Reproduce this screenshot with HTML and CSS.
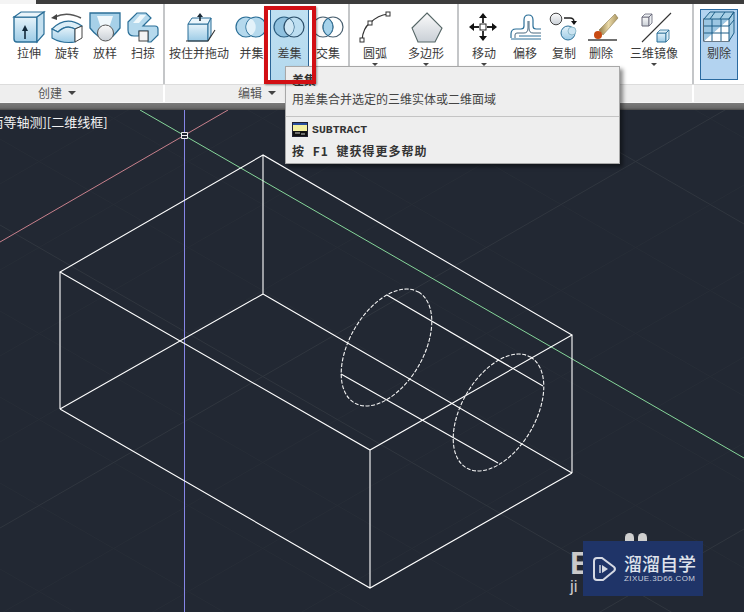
FILE: index.html
```html
<!DOCTYPE html>
<html lang="zh">
<head>
<meta charset="utf-8">
<title>差集</title>
<link rel="stylesheet" href="styles.css">
</head>
<body>
<svg class="defs" width="0" height="0" aria-hidden="true">
  <defs>
    <linearGradient id="blue" x1="0" y1="0" x2="0" y2="1"><stop offset="0" stop-color="#e6f3fa"/><stop offset="1" stop-color="#9ccbe6"/></linearGradient>
    <linearGradient id="gray" x1="0" y1="0" x2="0" y2="1"><stop offset="0" stop-color="#fbfbfb"/><stop offset="1" stop-color="#c9cfd6"/></linearGradient>
    <linearGradient id="stick" x1="0" y1="0" x2="1" y2="0"><stop offset="0" stop-color="#8f7a45"/><stop offset=".5" stop-color="#ead9a8"/><stop offset="1" stop-color="#a99560"/></linearGradient>
  </defs>
</svg>
<div class="app">
  <div class="topbar"><div class="topbar-left"></div></div>
  <div class="ribbon">
    <section class="panel p1">
      <div class="tool w38"><svg width="38" height="38" viewBox="10 8 38 38"><path d="M14 17H37V42H17Q14 42 14 39Z" fill="url(#blue)" stroke="#2b6f98" stroke-width="1.4"/><path d="M14 17L21 12H44L37 17Z" fill="#e9f4fa" stroke="#2b6f98" stroke-width="1.2"/><path d="M37 17L44 12V34L37 42Z" fill="#c4e0f0" stroke="#2b6f98" stroke-width="1.2"/><path d="M25 39V30" stroke="#12293a" stroke-width="1.6"/><path d="M22 31L25 25L28 31Z" fill="#12293a"/></svg><span class="label">拉伸</span></div>
      <div class="tool w38"><svg width="38" height="38" viewBox="48 8 38 38"><path d="M55 17Q67 11 81 18" fill="none" stroke="#555" stroke-width="1.4"/><path d="M51 18L57 14V20Z" fill="#444"/><path d="M52 29Q66 15 82 26L75 29Q66 24 58 32Z" fill="#dceef7" stroke="#2b6f98" stroke-width="1.1"/><path d="M52 29L58 32Q66 24 75 29V42Q62 44 52 38Z" fill="url(#blue)" stroke="#2b6f98" stroke-width="1.1"/><path d="M75 29L82 26V38L75 42Z" fill="#fff" stroke="#444" stroke-width="1"/></svg><span class="label">旋转</span></div>
      <div class="tool w38"><svg width="38" height="38" viewBox="86 8 38 38"><path d="M90 13H120V28Q116 33 113 36H98Q94 33 90 28Z" fill="#a6d0e8" stroke="#2b6f98" stroke-width="1.3"/><path d="M97 16H113L109 28H101Z" fill="#f0f8fc"/><circle cx="105.500" cy="33" r="8" fill="url(#gray)" stroke="#555" stroke-width="1"/></svg><span class="label">放样</span></div>
      <div class="tool w38"><svg width="38" height="38" viewBox="124 8 38 38"><path d="M128 22L137 13H146L151 18L143 26H155Q158 26 158 29V35L151 42H148V31H139V36H134Q128 36 128 30Z" fill="#b5d9ed" stroke="#2b6f98" stroke-width="1.2"/><path d="M133 23L140 15H146L139 23Z" fill="#eff8fc"/><rect x="139" y="31" width="9" height="10" fill="#f4f4f4" stroke="#444"/></svg><span class="label">扫掠</span></div>
    </section>
    <section class="panel p2">
      <div class="tool w68"><svg width="68" height="38" viewBox="165 8 68 38"><path d="M188 24H208V41H188Z" fill="url(#blue)" stroke="#2b6f98"/><path d="M188 24L192 18H211L208 24Z" fill="#eaf5fb" stroke="#2b6f98"/><path d="M208 24L211 18V35L208 41Z" fill="#cbe4f2" stroke="#2b6f98"/><path d="M200 21V16" stroke="#1b2b38" stroke-width="1.6"/><path d="M197 17L200 13L203 17Z" fill="#1b2b38"/><path d="M186 41H208L215 30" fill="none" stroke="#333" stroke-width="1.1"/></svg><span class="label">按住并拖动</span></div>
      <div class="tool w37"><svg width="37" height="38" viewBox="233 8 37 38"><circle cx="246" cy="27" r="10" fill="#b5d9ed" stroke="#2b6f98" stroke-width="1.2"/><circle cx="256" cy="27" r="10" fill="#b5d9ed" stroke="#2b6f98" stroke-width="1.2"/><path d="M251 18.500A10 10 0 0 1 251 35.500A10 10 0 0 1 251 18.500Z" fill="#e3f2fa"/></svg><span class="label">并集</span></div>
      <div class="tool w39 active"><svg width="37" height="37" viewBox="272 9 37 37"><circle cx="285" cy="27" r="10" fill="#8fc1df" stroke="#2c5f82" stroke-width="1.2"/><path d="M290 18.400A10 10 0 0 1 290 35.600A10 10 0 0 1 290 18.400Z" fill="#cfe7f4"/><circle cx="295" cy="27" r="10" fill="none" stroke="#2c4f6a" stroke-width="1.2"/></svg><span class="label">差集</span></div>
      <div class="tool w38"><svg width="38" height="38" viewBox="309 8 38 38"><circle cx="323" cy="27" r="10" fill="#f7f7f7" stroke="#4a6070" stroke-width="1.2"/><circle cx="333" cy="27" r="10" fill="none" stroke="#4a6070" stroke-width="1.2"/><path d="M328 18.400A10 10 0 0 1 328 35.600A10 10 0 0 1 328 18.400Z" fill="#a6d2ea" stroke="#2b6f98"/></svg><span class="label">交集</span></div>
    </section>
    <section class="panel p3">
      <div class="tool w50"><svg width="50" height="38" viewBox="350 8 50 38"><path d="M362 40Q363 28 370 23Q378 15 388 14" fill="none" stroke="#333" stroke-width="1.2"/><rect x="360" y="38" width="4" height="4" fill="#fff" stroke="#333"/><rect x="368" y="21" width="4" height="4" fill="#fff" stroke="#333"/><rect x="386" y="12" width="4" height="4" fill="#fff" stroke="#333"/></svg><span class="label">圆弧</span><i class="caret"></i></div>
      <div class="tool w52"><svg width="52" height="38" viewBox="400 8 52 38"><path d="M427 13L442 28L435 42H418L412 28Z" fill="url(#gray)" stroke="#566" stroke-width="1.1"/></svg><span class="label">多边形</span><i class="caret"></i></div>
    </section>
    <section class="panel p4">
      <div class="tool w50"><svg width="50" height="38" viewBox="459 8 50 38"><rect x="480" y="24" width="6" height="6" fill="#fff" stroke="#222"/><path d="M483 23V17M483 31V37M479 27H473M487 27H493" stroke="#222" stroke-width="1.8"/><path d="M483 13L487 18H479ZM483 41L487 36H479ZM469 27L474 23V31ZM497 27L492 23V31Z" fill="#111"/></svg><span class="label">移动</span><i class="caret"></i></div>
      <div class="tool w32"><svg class="wide" width="36" height="38" viewBox="507 8 36 38"><path d="M511 38V34Q511 29 516 29H521Q524 29 524 26V20Q524 15 528.500 15Q533 15 533 20V26Q533 29 536 29H541" fill="none" stroke="#2b6f98" stroke-width="1.2"/><path d="M515 38V35Q515 33 517 33H524Q528 33 528 28V21M529 21V28Q529 33 533 33H541" fill="none" stroke="#4a6a80" stroke-width="1"/><path d="M519 36H541M511 39H541" fill="none" stroke="#2b6f98" stroke-width="1"/></svg><span class="label">偏移</span></div>
      <div class="tool w46"><svg width="46" height="38" viewBox="541 8 46 38"><circle cx="556" cy="19" r="5.800" fill="url(#gray)" stroke="#444"/><circle cx="568" cy="33" r="7" fill="url(#blue)" stroke="#2b6f98"/><circle cx="572" cy="31" r="4" fill="#cbe4f2" stroke="#7ab" stroke-width=".7"/><path d="M564 18H570Q574 18 574 22" fill="none" stroke="#222" stroke-width="1.3"/><path d="M571 21H577L574 25Z" fill="#111"/></svg><span class="label">复制</span></div>
      <div class="tool w28"><svg class="wide" width="36" height="38" viewBox="583 8 36 38"><path d="M588 40H617" stroke="#333" stroke-width="1.400"/><path d="M599 30L615 14L618 18L603 35Z" fill="url(#stick)" stroke="#7c6a3c" stroke-width=".5"/><circle cx="598" cy="35" r="4" fill="#c84a12"/></svg><span class="label">删除</span></div>
      <div class="tool w78"><svg width="78" height="38" viewBox="615 8 78 38"><path d="M642 17H649V26H642Z" fill="url(#gray)" stroke="#667"/><path d="M642 17L645 14H652L649 17ZM649 17L652 14V23L649 26Z" fill="#eceff2" stroke="#667" stroke-width=".8"/><path d="M642 42L671 13" stroke="#333" stroke-width="1.1"/><path d="M657 33H666V42H657Z" fill="url(#blue)" stroke="#2b6f98"/><path d="M657 33L660 30H669L666 33ZM666 33L669 30V39L666 42Z" fill="#dceef7" stroke="#2b6f98" stroke-width=".8"/></svg><span class="label">三维镜像</span><i class="caret"></i></div>
    </section>
    <section class="panel p5">
      <div class="tool w38 selected"><svg width="36" height="36" viewBox="701 10 36 36"><path d="M704 19H729V41H704Z" fill="#d8d8d8" stroke="#222" stroke-width="1.200"/><path d="M704 41L729 19V41Z" fill="#fff"/><path d="M704 41L729 19H704Z" fill="#9cc6e2"/><path d="M704 19L710 12H734L729 19ZM729 19L734 12V33L729 41Z" fill="#a8cfe6" stroke="#1e5f88"/><path d="M712 19V41M721 19V41M704 26H729M704 33H729M715 12L710 19M725 12L720 19M729 26L734 20" stroke="#1e5f88" fill="none"/></svg><span class="label">剔除</span></div>
    </section>
  </div>
  <div class="titles">
    <div class="title p1"><span>创建</span><i class="caret dark"></i></div>
    <div class="title p2"><span>编辑</span><i class="caret dark"></i></div>
    <div class="title p3"></div>
    <div class="title p4"></div>
    <div class="title p5"></div>
  </div>
  <div class="gutter"></div>
  <div class="viewport">
    <div class="viewlabel">[西南等轴测][二维线框]</div>
    <svg class="drawing" width="744" height="502" viewBox="0 110 744 502">
      <path class="grid-minor" d="M0 184L744 -245M0 270L744 -159M0 356L744 -73M0 442L744 13M0 614L744 185M0 700L744 271M0 786L744 357M0 872L744 443M0 1044L744 615M0 311L744 740M0 397L744 826M0 483L744 912M0 569L744 998M0 139L744 568M0 53L744 482M0 -33L744 396M0 -119L744 310M0 -291L744 138M0 -377L744 52"/>
      <path class="grid-major" d="M0 528L744 99M0 958L744 529M0 225L744 654M0 -205L744 224"/>
      <path class="axis-r" d="M0 242L228 110"/>
      <path class="axis-g" d="M140 110L744 458"/>
      <path class="axis-b" d="M184.500 110V612"/>
      <path class="ucs" d="M181.500 132.500H187.500V138.500H181.500ZM181.500 135.500H187.500"/>
      <path class="edge" d="M263 155L60 272L370 450L572 335L263 155ZM263 155V294M263 294L60 409M263 294L572 473M60 272V409M370 450V588M572 335V473M60 409L370 588L572 473M387 295L543 386M341 374L498 463"/>
      <ellipse class="hole" cx="386.500" cy="347.500" rx="64" ry="37" transform="rotate(-60 386.500 347.500)"/>
      <ellipse class="hole" cx="498.500" cy="412.500" rx="64" ry="37" transform="rotate(-60 498.500 412.500)"/>
    </svg>
    <div class="wm-under">
      <b class="wm-e">E</b>
      <span class="wm-ji">ji</span>
    </div>
    <div class="wm-dots"><i></i><i></i></div>
    <div class="watermark">
      <svg width="26" height="28" viewBox="0 0 26 28"><path d="M6 3H11L23 12Q25 14 23 16L12 25H6Q3 25 3 22V6Q3 3 6 3Z" fill="none" stroke="#d5d9e4" stroke-width="2"/><path d="M11 10L17 14L11 18Z" fill="#d5d9e4"/><path d="M9 10V18" stroke="#d5d9e4" stroke-width="1.500"/></svg>
      <div class="wm-text"><strong>溜溜自学</strong><small>ZIXUE.3D66.COM</small></div>
    </div>
  </div>
  <div class="tooltip">
    <div class="tt-title">差集</div>
    <div class="tt-desc">用差集合并选定的三维实体或二维面域</div>
    <div class="tt-rule"></div>
    <div class="tt-cmd">
      <svg width="16" height="15" viewBox="0 0 16 15"><rect x=".5" y=".5" width="15" height="14" fill="#f4f0a0" stroke="#223"/><rect x="1" y="1" width="14" height="2" fill="#2a4fa0"/><rect x="1" y="9" width="14" height="5" fill="#111"/><path d="M3 11H8M9 12H13" stroke="#ccc"/></svg>
      <span>SUBTRACT</span>
    </div>
    <div class="tt-help">按 F1 键获得更多帮助</div>
  </div>
  <div class="redbox"></div>
</div>
</body>
</html>
```
FILE: styles.css
```css
* { box-sizing: border-box; }
html, body { margin: 0; padding: 0; }
body { width: 744px; height: 612px; overflow: hidden; background: #222833; font-family: "Noto Sans CJK SC", "Liberation Sans", sans-serif; }
.defs { position: absolute; }
.app { position: relative; width: 744px; height: 612px; overflow: hidden; }
.topbar { height: 4px; background: #3d3d3d; }
.topbar-left { width: 36px; height: 4px; background: #f4f4f4; }
.ribbon { display: flex; height: 80px; background: #fff; }
.panel { display: flex; height: 80px; border-right: 2px solid #c4c6c8; }
.p1 { width: 165px; padding-left: 10px; }
.p2 { width: 185px; }
.p3 { width: 109px; }
.p4 { width: 235px; }
.p5 { width: 50px; border-right: 0; padding-left: 6px; }
.tool { position: relative; display: flex; flex-direction: column; align-items: center; flex: none; padding-top: 4px; }
.tool svg { display: block; flex: none; }
.tool svg.wide { margin: 0 -4px; }
.w28 { width: 28px; } .w32 { width: 32px; } .w37 { width: 37px; } .w38 { width: 38px; } .w39 { width: 39px; }
.w46 { width: 46px; } .w50 { width: 50px; } .w52 { width: 52px; } .w68 { width: 68px; } .w78 { width: 78px; }
.label { font-size: 12px; line-height: 16px; color: #3a3a3a; white-space: nowrap; margin-top: -1px; }
.caret { width: 0; height: 0; border: 3px solid transparent; border-top: 3px solid #444; border-bottom: 0; margin-top: 2px; }
.active { margin-top: 5px; height: 71px; padding-top: 0; background: linear-gradient(#bfe0f2, #b4d9ee); border-left: 1px solid #2a6496; border-right: 1px solid #2a6496; }
.selected { margin-top: 5px; height: 71px; padding-top: 0; background: #b3d3f0; border: 1px solid #2a6aa0; }
.titles { display: flex; height: 18px; background: #eeeeee; border-top: 1px solid #dcdcdc; }
.title { display: flex; align-items: center; gap: 6px; height: 17px; padding-bottom: 2px; border-right: 2px solid #fff; font-size: 12px; line-height: 14px; color: #555; }
.title.p1 { padding-left: 38px; }
.title.p2 { padding-left: 73px; }
.title.p5 { border-right: 0; }
.caret.dark { border-width: 4px; border-top-color: #444; border-bottom: 0; margin: 0; }
.gutter { height: 8px; background: linear-gradient(#f6f6f6 0 1px, #7b7b7b 1px, #6a6a6a 6px, #4a4a4a); }
.viewport { position: relative; height: 502px; background: #222833; }
.viewlabel { position: absolute; left: -27px; top: 3px; font-size: 13px; line-height: 18px; color: #f2f2f2; white-space: nowrap; }
.drawing { display: block; }
.grid-minor { fill: none; stroke: #272d37; }
.grid-major { fill: none; stroke: #30363f; }
.axis-r { stroke: #c8808c; fill: none; }
.axis-g { stroke: #86d69a; fill: none; }
.axis-b { stroke: #8585e6; fill: none; }
.ucs { fill: #232833; stroke: #f0f0f0; }
.edge { fill: none; stroke: #ffffff; stroke-width: 1.1; }
.hole { fill: none; stroke: #f4f4f4; stroke-width: 1.1; stroke-dasharray: 4 1.6; }
.tooltip { position: absolute; left: 285px; top: 66px; width: 335px; height: 98px; background: #eeeeee; border: 1px solid #a8a8a8; box-shadow: 3px 3px 4px rgba(0, 0, 0, .45); color: #333; padding: 3px 6px 0; }
.tt-title { font-size: 12px; line-height: 16px; font-weight: 700; margin-top: 2px; }
.tt-desc { font-size: 12px; line-height: 16px; margin-top: 3px; color: #444; white-space: nowrap; }
.tt-rule { height: 1px; background: #c4c4c4; margin: 9px -6px 0; }
.tt-cmd { display: flex; align-items: center; gap: 4px; margin-top: 5px; height: 15px; font: 700 11.5px "Liberation Mono", monospace; color: #333; }
.tt-help { font-size: 12px; line-height: 16px; font-weight: 700; margin-top: 6px; color: #333; letter-spacing: 1px; word-spacing: 4px; white-space: nowrap; }
.redbox { position: absolute; left: 264px; top: 6px; width: 52px; height: 78px; border: 4px solid #d20f14; box-shadow: 1px 1px 2px rgba(0, 0, 0, .4); }
.watermark { position: absolute; left: 583px; top: 431px; width: 120px; height: 55px; background: #1f3468; display: flex; align-items: center; gap: 7px; padding-left: 8px; color: #dfe3ec; }
.wm-text { display: flex; flex-direction: column; }
.wm-text strong { font-size: 18px; line-height: 20px; font-weight: 500; white-space: nowrap; }
.wm-text small { font: 8px/10px "Liberation Sans", sans-serif; letter-spacing: .4px; color: #c8cedc; white-space: nowrap; margin-top: 1px; }
.wm-under { position: absolute; left: 570px; top: 436px; display: flex; flex-direction: column; color: #c9c9c9; }
.wm-e { font: 700 32px/34px "Liberation Sans", sans-serif; }
.wm-ji { font: 17px/14px "Liberation Sans", sans-serif; }
.wm-dots { position: absolute; left: 625px; top: 423px; display: flex; gap: 4px; }
.wm-dots i { width: 9px; height: 9px; border-radius: 5px 5px 0 0; background: #cfcfcf; }
```
